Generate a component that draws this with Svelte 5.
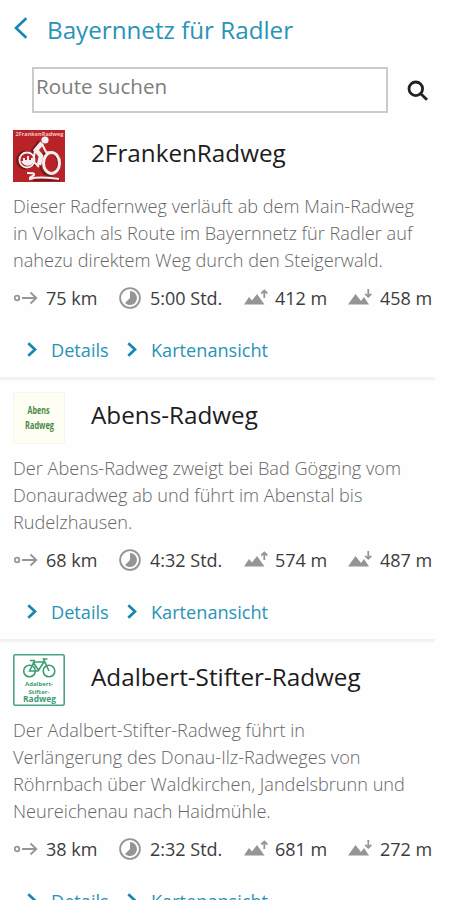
<script>
	let search = $state('');

	const routes = [
		{
			logo: 'franken',
			name: '2FrankenRadweg',
			text: ['Dieser Radfernweg verläuft ab dem Main-Radweg', 'in Volkach als Route im Bayernnetz für Radler auf', 'nahezu direktem Weg durch den Steigerwald.'],
			length: 75,
			time: '5:00',
			up: 412,
			down: 458
		},
		{
			logo: 'abens',
			name: 'Abens-Radweg',
			text: ['Der Abens-Radweg zweigt bei Bad Gögging vom', 'Donauradweg ab und führt im Abenstal bis', 'Rudelzhausen.'],
			length: 68,
			time: '4:32',
			up: 574,
			down: 487
		},
		{
			logo: 'stifter',
			name: 'Adalbert-Stifter-Radweg',
			text: ['Der Adalbert-Stifter-Radweg führt in', 'Verlängerung des Donau-Ilz-Radweges von', 'Röhrnbach über Waldkirchen, Jandelsbrunn und', 'Neureichenau nach Haidmühle.'],
			length: 38,
			time: '2:32',
			up: 681,
			down: 272
		}
	];
</script>

{#snippet chevron()}
	<svg class="chevron" viewBox="0 0 10 15"><path d="M1.3 1.2 8 7.5l-6.7 6.3" /></svg>
{/snippet}

<div class="page">
	<header>
		<svg class="back" viewBox="0 0 14 22"><path d="M12.3 1.3 2 11l10.3 9.7" /></svg>
		<h1>Bayernnetz für Radler</h1>
	</header>

	<div class="search">
		<input type="text" placeholder="Route suchen" bind:value={search} />
		<svg class="glass" viewBox="0 0 22 22">
			<circle cx="8.8" cy="8.8" r="6.8" />
			<path d="m13.8 13.8 6.2 6" />
		</svg>
	</div>

	{#each routes as route}
		<article>
			<div class="head">
				{#if route.logo === 'franken'}
					<svg class="logo" viewBox="0 0 52 52">
						<rect width="52" height="52" fill="#b92327" />
						<text x="26.5" y="6" font-size="5.5" textLength="48" lengthAdjust="spacingAndGlyphs" fill="#f0c4c4">2FrankenRadweg</text>
						<g fill="none" stroke="#6c1b1d" stroke-width="2">
							<circle cx="12.5" cy="30" r="8.5" />
							<ellipse cx="36" cy="33.5" rx="9" ry="11.5" />
							<path d="M20 50h27M26 11l-7 9 3 16" />
						</g>
						<g fill="none" stroke="#f4eeee">
							<circle cx="14" cy="30" r="7.5" stroke-width="1.8" />
							<ellipse cx="38.5" cy="33" rx="8" ry="10.5" stroke-width="3" />
							<path d="m29 13-6 7 5 6-2 9" stroke-width="4.5" />
							<path d="m29 14 4 8 5 .5M22 21l-2 10 6 6" stroke-width="2" />
							<path d="M14 43c4 0 8 0 7 2s-5 1-4 4c9-3 20-1 29 0" stroke-width="2" />
						</g>
						<circle cx="32" cy="10" r="3.6" fill="#f4eeee" />
						<path d="M8 31h2v-3h2v2h2v-4h2v4h2v-2h2v5c-2 4-9 4-12-2z" fill="#f4eeee" />
					</svg>
				{:else if route.logo === 'abens'}
					<svg class="logo" viewBox="0 0 52 52">
						<rect x=".5" y=".5" width="51" height="51" fill="#fefef3" stroke="#f7f7f0" />
						<g font-size="10" fill="#4a8a4c">
							<text x="25.5" y="22" textLength="22" lengthAdjust="spacingAndGlyphs">Abens</text>
							<text x="26.5" y="36.5" textLength="29" lengthAdjust="spacingAndGlyphs">Radweg</text>
						</g>
					</svg>
				{:else}
					<svg class="logo" viewBox="0 0 52 52">
						<rect x=".8" y=".8" width="50.4" height="50.4" rx="1.5" fill="#fff" stroke="#4ba57d" stroke-width="1.6" />
						<g fill="none" stroke="#3a9d70" stroke-width="1.6">
							<circle cx="16.5" cy="17" r="5.8" />
							<circle cx="36" cy="17" r="5.8" />
							<path d="m16.5 17 4.5-9h10l-6 9zM20 8l6 9M36 17 30.5 5h4M17 6.5h5" />
						</g>
						<g font-size="6" fill="#3a9d70">
							<text x="26" y="32" textLength="28" lengthAdjust="spacingAndGlyphs">Adalbert-</text>
							<text x="26" y="39.5" textLength="21" lengthAdjust="spacingAndGlyphs">Stifter-</text>
							<text x="26.5" y="48" font-size="8" textLength="33" lengthAdjust="spacingAndGlyphs">Radweg</text>
						</g>
					</svg>
				{/if}
				<h2>{route.name}</h2>
			</div>

			<p>
				{#each route.text as line}
					<span>{line}</span>
				{/each}
			</p>

			<div class="stats">
				<div class="stat length">
					<svg viewBox="0 0 24 14">
						<circle cx="3" cy="7" r="2.3" />
						<path d="M8 7h14M16.5 1.5 22.3 7l-5.8 5.5" />
					</svg>
					{route.length} km
				</div>
				<div class="stat time">
					<svg viewBox="0 0 22 22">
						<circle cx="11" cy="11" r="9.9" />
						<path class="fill" d="M11 4a7 7 0 1 1-5 12l5-5z" />
					</svg>
					{route.time} Std.
				</div>
				<div class="stat up">
					<svg viewBox="0 0 24 16">
						<path class="fill" d="M0 15.5 5 8l3 3.5L13 5l7.5 10.5z" />
						<path d="M20.3 9V1.5M17.3 4.5l3-3 3 3" />
					</svg>
					{route.up} m
				</div>
				<div class="stat down">
					<svg viewBox="0 0 24 16">
						<path class="fill" d="M0 15.5 7.5 5l5.5 7 3-4 5 7.5z" />
						<path d="M20.3 0v7.5M17.3 4.8l3 3 3-3" />
					</svg>
					{route.down} m
				</div>
			</div>

			<div class="links">
				<span class="link details">{@render chevron()}Details</span>
				<span class="link">{@render chevron()}Kartenansicht</span>
			</div>
		</article>
	{/each}
</div>

<style>
	:global(body) {
		margin: 0;
		background: #fefefe;
	}

	.page {
		width: 466px;
		height: 900px;
		overflow: hidden;
		font-family: "Open Sans", "Noto Sans", sans-serif;
	}

	svg {
		display: block;
		flex: none;
		fill: none;
	}

	header {
		display: flex;
		align-items: center;
		height: 60px;
		padding-left: 14px;
	}

	.back {
		width: 14px;
		height: 22px;
		margin-bottom: 4px;
		stroke: #1687b0;
		stroke-width: 2.6;
	}

	h1 {
		margin: 0 0 0 19px;
		color: #2993b8;
		font-size: 24.2px;
		font-weight: 400;
		line-height: 60px;
	}

	.search {
		display: flex;
		align-items: center;
		height: 58px;
		padding: 0 0 0 32px;
	}

	input {
		box-sizing: border-box;
		width: 356px;
		height: 46px;
		margin: 2px 19px 0 0;
		padding: 0 0 8px 2px;
		border: 2px solid #cbcbcb;
		background: #fff;
		font: 400 20.6px "Open Sans", sans-serif;
		outline: none;
	}

	input::placeholder {
		color: #7d7d7d;
		opacity: 1;
	}

	.glass {
		width: 22px;
		height: 22px;
		margin-top: 3px;
		stroke: #222;
		stroke-width: 2.8;
	}

	article {
		width: 435px;
		padding-top: 12px;
		border-bottom: 3px solid #f2f2f2;
	}

	.head {
		display: flex;
		align-items: center;
		padding-left: 13px;
	}

	.logo {
		width: 52px;
		height: 52px;
		font-family: "Open Sans", sans-serif;
		font-weight: 700;
		text-anchor: middle;
	}

	h2 {
		margin: 0 0 6px 26px;
		color: #1c1c1c;
		font-size: 24.25px;
		font-weight: 400;
		line-height: 46px;
	}

	p {
		margin: 11px 0 0 13px;
		color: #666;
		font-size: 18.15px;
		font-weight: 300;
		line-height: 27px;
	}

	p span {
		display: block;
		white-space: nowrap;
	}

	.stats {
		display: flex;
		height: 48px;
		padding-left: 14px;
		color: #3c3c3c;
		font-size: 18px;
	}

	.stat {
		display: flex;
		align-items: center;
		flex: none;
		white-space: nowrap;
	}

	.stat svg {
		stroke: #959595;
		stroke-width: 1.8;
	}

	.stat .fill {
		fill: #959595;
		stroke: none;
	}

	.length {
		width: 105px;
	}

	.length svg {
		width: 24px;
		height: 14px;
		margin-right: 8px;
	}

	.time {
		width: 125px;
	}

	.time svg {
		width: 22px;
		height: 22px;
		margin-right: 9px;
	}

	.up {
		width: 104px;
	}

	.up svg,
	.down svg {
		width: 24px;
		height: 16px;
		margin: 0 7px 2px 0;
	}

	.down svg {
		margin-right: 8px;
	}

	.links {
		display: flex;
		height: 55px;
		padding-left: 27px;
		color: #2993b8;
		font-size: 18.15px;
	}

	.link {
		display: flex;
		align-items: center;
	}

	.details {
		width: 100px;
	}

	.chevron {
		width: 10px;
		height: 15px;
		margin-right: 14px;
		stroke: #1687b0;
		stroke-width: 2.7;
	}
</style>
